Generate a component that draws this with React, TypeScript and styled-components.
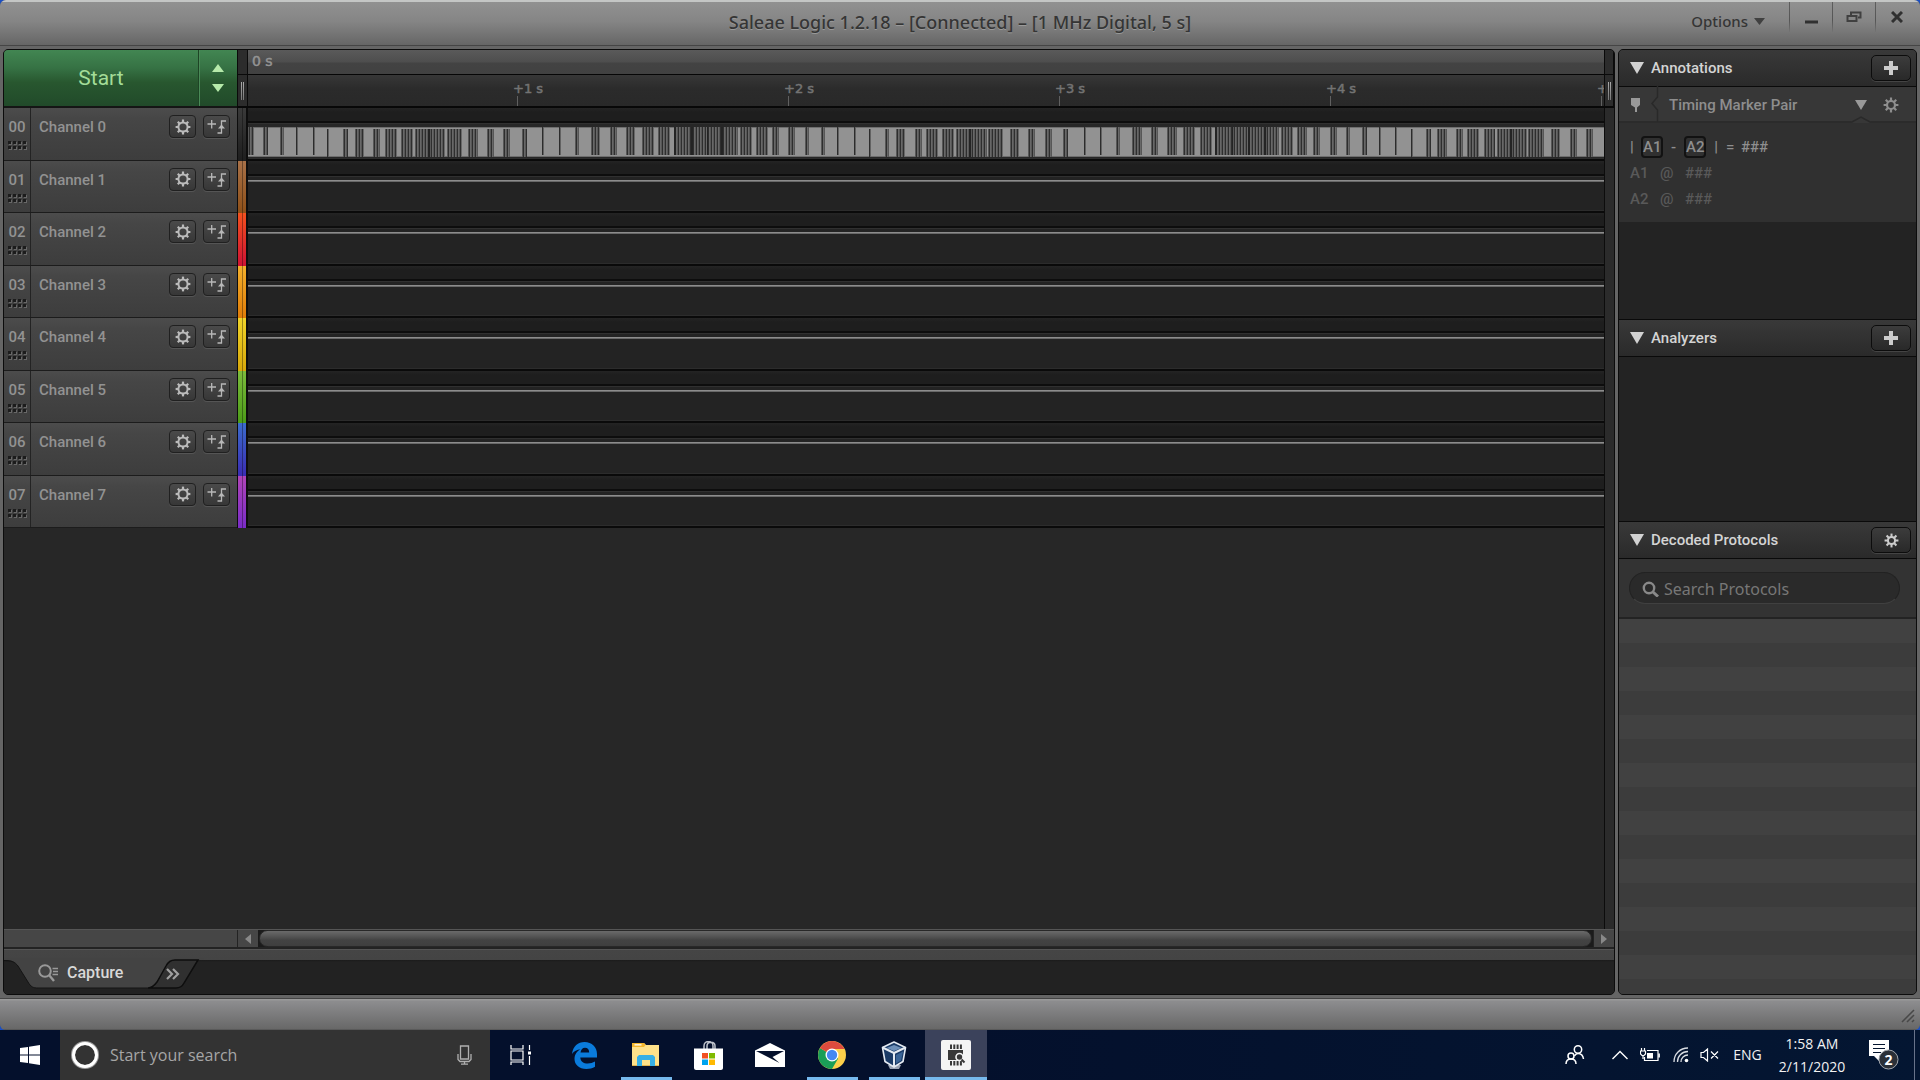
import React from "react";
import styled, { createGlobalStyle } from "styled-components";

const ui = `Roboto, "Liberation Sans", sans-serif`;
const humanist = `"Noto Sans", "Open Sans", sans-serif`;
const wide = `"DejaVu Sans", "Noto Sans", sans-serif`;
const system = `"Open Sans", "Noto Sans", sans-serif`;

const Global = createGlobalStyle`
  * { box-sizing: border-box; }
  body { margin: 0; background: #04102c; font-family: ${ui}; overflow: hidden; }
  button, input { font: inherit; color: inherit; border: 0; padding: 0; margin: 0; background: none; }
  svg { display: block; flex: none; }
`;

const Desktop = styled.div`
  height: 100vh;
  display: flex;
  flex-direction: column;
  background: #1c4fc0;
`;

const Window = styled.div`
  flex: 1;
  min-height: 0;
  display: flex;
  flex-direction: column;
  border-radius: 6px;
  overflow: hidden;
  background: #5d5d5d;
`;

/* ---------- title bar ---------- */
const TitleBar = styled.header`
  height: 46px;
  flex: none;
  display: grid;
  grid-template-columns: 1fr auto 1fr;
  border-top: 2px solid #c4c6c5;
  border-bottom: 1px solid #454545;
  background: linear-gradient(#919191, #858585 45%, #666);
  color: #353535;
`;

const Title = styled.h1`
  grid-column: 2;
  margin: 0;
  font: 500 18px/41px ${humanist};
  text-shadow: 0 1px 0 #9a9a9a;
`;

const TitleTools = styled.div`
  display: flex;
  justify-content: flex-end;
  padding-right: 2px;
`;

const OptionsButton = styled.button`
  display: flex;
  align-items: center;
  gap: 6px;
  margin-right: 24px;
  height: 38px;
  font: 500 15px/20px ${humanist};
`;

const CaptionButton = styled.button`
  width: 43px;
  height: 30px;
  display: flex;
  justify-content: center;
  align-items: center;
  border-left: 1px solid;
  border-image: linear-gradient(#5e5e5e, #555 60%, #777) 1;
`;

/* ---------- work area ---------- */
const Work = styled.div`
  flex: 1;
  min-height: 0;
  display: grid;
  grid-template-columns: minmax(0, 1fr) 299px;
  gap: 3px;
  padding: 3px;
  background: #656565;
`;

const Main = styled.main`
  display: flex;
  flex-direction: column;
  min-height: 0;
  border: 1px solid #0c0c0c;
  border-radius: 5px;
  overflow: hidden;
  background: #272727;
`;

const Board = styled.div`
  flex: 1;
  min-height: 0;
  display: grid;
  grid-template-columns: 233px 11px minmax(0, 1fr) 10px;
  grid-template-rows: 58px 420px 1fr;
`;

const StartBar = styled.div`
  display: grid;
  grid-template-columns: 1fr 38px;
  border-bottom: 2px solid #151515;
`;

const startGreen = `linear-gradient(#428652, #367244 32%, #28572f 58%, #214a2a)`;

const StartButton = styled.button`
  background: ${startGreen};
  color: #a3dc98;
  font: 400 21px/24px ${ui};
  border-right: 1px solid #1d4425;
`;

const DurationButtons = styled.div`
  display: flex;
  flex-direction: column;
  background: ${startGreen};
  border-left: 1px solid #4a8a57;
`;

const Stepper = styled.button<{ $up?: boolean }>`
  flex: 1;
  display: flex;
  justify-content: center;
  align-items: ${(p) => (p.$up ? "flex-end" : "flex-start")};
  padding: 6px 2px 6px 0;
`;

const Handle = styled.div`
  display: flex;
  flex-direction: column;
  border-left: 1px solid #0a0a0a;
  border-right: 1px solid #0a0a0a;
  border-bottom: 2px solid #080808;
  background: #2c2c2c;
`;

const HandleTop = styled.div`
  height: 25px;
  border-bottom: 1px solid #0a0a0a;
`;

const Grip = styled.div`
  flex: 1;
  display: flex;
  justify-content: center;
  align-items: center;
  gap: 1px;
  &::before, &::after {
    content: "";
    width: 1px;
    height: 18px;
    background: linear-gradient(#aaa, #777);
  }
`;

const Ruler = styled.div`
  display: grid;
  grid-template-rows: 25px 33px;
  min-width: 0;
  overflow: hidden;
`;

const RulerTop = styled.div`
  border-bottom: 1px solid #060606;
  background: linear-gradient(#5a5a5a, #4e4e4e 50%, #434343 54%, #414141);
  color: #949494;
  font: 400 14px/23px ${wide};
  -webkit-text-stroke: 0.5px;
  padding-left: 4px;
`;

const RulerTicks = styled.div`
  display: grid;
  grid-template-columns: 265px repeat(4, 271px) 1fr;
  border-bottom: 2px solid #080808;
  background: linear-gradient(#373737, #2b2b2b 45%, #292929);
`;

const Tick = styled.div`
  white-space: nowrap;
  color: #737373;
  font: 400 13px/28px ${wide};
  -webkit-text-stroke: 0.5px;
  background: linear-gradient(#606060, #606060) 4px 100% / 1px 10px no-repeat;
`;

const Channels = styled.div`
  display: grid;
  grid-template-rows: repeat(8, 1fr);
`;

const ChannelHead = styled.div`
  display: grid;
  grid-template-columns: 27px 1fr auto auto;
  border-bottom: 1px solid #1c1c1c;
  background: linear-gradient(#4c4c4c, #464646 20%, #3d3d3d);
  color: #929292;
`;

const ChannelIndex = styled.div`
  display: flex;
  flex-direction: column;
  align-items: center;
  border-right: 1px solid #232323;
  font: 500 15px/20px ${ui};
  padding-top: 9px;
  gap: 4px;
`;

const ChannelName = styled.div`
  font: 500 15px/20px ${ui};
  padding: 9px 0 0 8px;
`;

const SmallButton = styled.button`
  width: 27px;
  height: 23px;
  margin: 7px 7px 0 0;
  display: flex;
  align-items: center;
  justify-content: center;
  border: 1px solid #202020;
  border-radius: 4px;
  background: linear-gradient(#4a4a4a, #373737);
  box-shadow: 0 1px 0 #555;
  color: #bbb;
`;

const ColorStrip = styled.div<{ $from: string; $to: string }>`
  border: 1px solid #0d0d0d;
  border-width: 0 2px 0 1px;
  background:
    linear-gradient(90deg, transparent 45%, rgba(0, 0, 0, 0.35) 45%, rgba(0, 0, 0, 0.35) 60%, transparent 60%),
    linear-gradient(${(p) => p.$from}, ${(p) => p.$to});
`;

const Track = styled.div`
  min-width: 0;
  display: grid;
  grid-template-rows: 15px 1fr;
  border-bottom: 2px solid #0a0a0a;
  background: #232323;
`;

const TrackTop = styled.div`
  border-bottom: 2px solid #0d0d0d;
  background: linear-gradient(#242424, #1e1e1e 30%);
`;

const TrackBody = styled.div`
  padding-top: 3px;
  border-top: 1px solid #303030;
  border-bottom: 1px solid #2c2c2c;
  background: #232323;
`;

const FlatLine = styled.div`
  height: 2px;
  background: linear-gradient(#8c8c8c 50%, #686868 50%);
`;

const WaveBody = styled(TrackBody)`
  padding: 3px 0 0;
  background: #272727;
  svg { width: 100%; height: 30px; }
`;

const RightRail = styled.div`
  grid-row: 2 / 4;
  grid-column: 4;
  border-left: 1px solid #0c0c0c;
  background: #2b2b2b;
`;

/* ---------- horizontal scroll ---------- */
const ScrollRow = styled.div`
  height: 20px;
  flex: none;
  display: grid;
  grid-template-columns: 233px 21px minmax(0, 1fr) 21px;
  border-top: 1px solid #555;
  border-bottom: 2px solid #232323;
  background: #464646;
`;

const ScrollArrow = styled.button`
  border-left: 1px solid #232323;
  display: flex;
  align-items: center;
  justify-content: center;
  color: #898989;
`;

const ScrollTrack = styled.div`
  background: #1b1b1b;
  padding: 0 1px;
`;

const ScrollThumb = styled.div`
  height: 17px;
  border: 1px solid #282828;
  border-radius: 9px;
  background: linear-gradient(#6a6a6a, #555 35%, #434343 60%, #3f3f3f);
`;

const Tabs = styled.div`
  height: 45px;
  flex: none;
  display: grid;
  grid-template-columns: 200px 1fr;
  border-top: 1px solid #555;
  background: linear-gradient(#454545 0, #444 10px, #1b1b1b 10px, #222 12px, #222);
`;

const TabStrip = styled.div`
  position: relative;
  display: grid;
  grid-template-columns: 148px 50px;
  > svg { position: absolute; left: 0; top: 0; }
`;

const Tab = styled.button`
  position: relative;
  display: flex;
  align-items: center;
  gap: 8px;
  padding: 1px 0 0 34px;
  color: #d8d8d8;
  font: 500 16px/20px ${ui};
`;

const MoreTab = styled(Tab)`
  padding: 4px 0 0 14px;
`;

/* ---------- side panels ---------- */
const Side = styled.aside`
  display: grid;
  grid-template-columns: minmax(0, 1fr);
  grid-template-rows: 269px 202px minmax(0, 1fr);
  min-height: 0;
  border: 1px solid #0c0c0c;
  border-radius: 5px;
  overflow: hidden;
  background: #232323;
`;

const Panel = styled.section`
  display: flex;
  flex-direction: column;
  min-height: 0;
`;

const PanelHead = styled.div<{ $first?: boolean }>`
  height: ${(p) => (p.$first ? 37 : 38)}px;
  flex: none;
  display: grid;
  grid-template-columns: 14px 1fr 40px;
  gap: 7px;
  align-items: center;
  padding: 0 5px 0 11px;
  border-top: ${(p) => (p.$first ? 0 : 1)}px solid #0a0a0a;
  border-bottom: 1px solid #0a0a0a;
  background: linear-gradient(#393939, #2a2a2a);
  color: #d4d4d4;
  h2 { margin: 0; font: 500 15px/20px ${ui}; }
`;

const PanelButton = styled.button`
  height: 26px;
  display: flex;
  justify-content: center;
  align-items: center;
  border: 1px solid #0c0c0c;
  border-radius: 5px;
  background: linear-gradient(#3c3c3c, #292929);
  box-shadow: 0 1px 0 #444;
  color: #ccc;
`;

const MarkerHead = styled.div`
  height: 36px;
  flex: none;
  display: grid;
  grid-template-columns: 38px 1fr 12px 32px;
  align-items: center;
  padding: 0 17px 0 11px;
  background: #373737;
  color: #8e8e8e;
  position: relative;
  font: 500 15px/20px ${ui};
  > :last-child { margin-left: 16px; }
`;

const MarkerEdge = styled.svg`
  position: absolute;
  left: 0;
  bottom: 0;
`;

const MarkerLabel = styled.span`
  padding-left: 1px;
`;

const MarkerBody = styled.div`
  height: 99px;
  flex: none;
  padding: 11px;
  background: #303030;
  color: #8e8e8e;
  font: 500 15px/26px ${ui};
`;

const Formula = styled.div`
  display: grid;
  grid-template-columns: 11px 22px 21px 22px 20px 15px auto;
  align-items: center;
  span:nth-of-type(2), span:nth-of-type(3) { text-align: center; }
`;

const MarkerButton = styled.button`
  height: 22px;
  border: 2px solid #121212;
  border-radius: 4px;
  background: #303030;
  font: 500 15px/18px ${ui};
`;

const MarkerTime = styled.div`
  display: grid;
  grid-template-columns: 30px 25px auto;
  color: #595959;
`;

const SearchArea = styled.div`
  height: 60px;
  flex: none;
  padding: 13px 16px 0 10px;
  border-bottom: 2px solid #232323;
  background: #333;
`;

const SearchBox = styled.label`
  height: 32px;
  display: flex;
  align-items: center;
  gap: 5px;
  padding: 1px 12px 0;
  border: 1px solid #222;
  border-bottom-color: #404040;
  border-radius: 16px;
  background: #2a2a2a;
  color: #898989;
  input {
    flex: 1;
    min-width: 0;
    outline: 0;
    font: 400 16px/20px ${humanist};
    &::placeholder { color: #777; opacity: 1; }
  }
`;

const ResultList = styled.div`
  flex: 1;
  background: repeating-linear-gradient(#414141 0, #414141 24px, #3c3c3c 24px, #3c3c3c 48px);
`;

const StatusBar = styled.footer`
  height: 32px;
  flex: none;
  display: flex;
  justify-content: flex-end;
  align-items: center;
  padding: 3px 5px 0 0;
  border-top: 1px solid #454545;
  border-bottom: 1px solid #5a5a5a;
  background: linear-gradient(#999 1px, #8d8d8f 2px, #686868);
`;

/* ---------- taskbar ---------- */
const Taskbar = styled.nav`
  height: 50px;
  flex: none;
  display: flex;
  background: linear-gradient(90deg, #04102c, #04102c 50%, #041632);
  color: #f2f2f2;
  font-family: ${system};
`;

const StartMenu = styled.button`
  width: 60px;
  display: flex;
  justify-content: center;
  align-items: center;
`;

const TaskSearch = styled.label`
  width: 430px;
  display: flex;
  align-items: center;
  gap: 11px;
  padding: 0 18px 0 11px;
  background: #333;
  input {
    flex: 1;
    min-width: 0;
    outline: 0;
    font: 400 16px/22px ${system};
    &::placeholder { color: #a6a6a6; opacity: 1; }
  }
`;

const Tasks = styled.div`
  display: flex;
  padding-right: 1px;
`;

const Task = styled.button<{ $running?: boolean; $active?: boolean }>`
  width: 62px;
  display: flex;
  justify-content: center;
  align-items: center;
  background: ${(p) =>
    p.$active
      ? "linear-gradient(#3b425b 47px, #76b9ed 47px)"
      : p.$running
        ? "linear-gradient(#76b9ed, #76b9ed) 50% 100% / 51px 3px no-repeat"
        : "none"};
`;

const TaskView = styled(Task)`
  width: 63px;
  padding-right: 3px;
`;

const Tray = styled.div`
  margin-left: auto;
  display: flex;
  align-items: center;
  padding-right: 5px;
`;

const TrayButton = styled.button<{ $w: number }>`
  width: ${(p) => p.$w}px;
  height: 50px;
  display: flex;
  justify-content: center;
  align-items: center;
  font: 400 14px/20px ${system};
`;

const Clock = styled(TrayButton)`
  flex-direction: column;
  font: 400 14px/23px ${system};
`;

const ShowDesktop = styled.div`
  width: 1px;
  height: 50px;
  background: #68738a;
`;

/* ---------- icons ---------- */
function Gear({ size = 16, ring = 4, hub = 2 }: { size?: number; ring?: number; hub?: number }) {
  return (
    <svg width={size} height={size} viewBox="0 0 16 16" fill="none" stroke="currentColor">
      <circle cx="8" cy="8" r={ring} strokeWidth={hub} />
      {[0, 45, 90, 135, 180, 225, 270, 315].map((a) => (
        <path key={a} d={`M8 ${8 - ring}V0.6`} strokeWidth="2.2" transform={`rotate(${a} 8 8)`} />
      ))}
    </svg>
  );
}

const TriggerIcon = () => (
  <svg width="20" height="17" viewBox="0 0 20 17" fill="none" stroke="#b8b8b8" strokeWidth="1.3">
    <path d="M0.500 6h8.500M4.700 2v8.500M10.500 15h4V3H19" />
    <path d="M11 10.500l3.500-4 3.500 4z" fill="#b8b8b8" stroke="none" />
  </svg>
);

const Dots = () => (
  <svg width="19" height="9" viewBox="0 0 19 9">
    {[0, 5, 10, 15].map((x) =>
      [0, 5].map((y) => (
        <g key={`${x}-${y}`}>
          <rect x={x + 1} y={y + 1} width="3" height="3" fill="#686868" />
          <rect x={x} y={y} width="3" height="3" fill="#1c1c1c" />
        </g>
      )),
    )}
  </svg>
);

const Triangle = ({ w, h, fill, up }: { w: number; h: number; fill: string; up?: boolean }) => (
  <svg width={w} height={h} viewBox={`0 0 ${w} ${h}`}>
    <path d={up ? `M0 ${h}L${w / 2} 0L${w} ${h}z` : `M0 0H${w}L${w / 2} ${h}z`} fill={fill} />
  </svg>
);

const Plus = () => (
  <svg width="14" height="14" viewBox="0 0 14 14">
    <path d="M5 0h4v5h5v4H9v5H5V9H0V5h5z" fill="#ccc" />
  </svg>
);

/* ---------- data ---------- */
const channels: [string, string][] = [
  ["#3a3a3a", "#1e1e1e"],
  ["#a87148", "#8f5018"],
  ["#f4511e", "#cf1234"],
  ["#f3b02c", "#e07c08"],
  ["#f0d42a", "#d8a80a"],
  ["#7cbc3c", "#4c9c18"],
  ["#3c6ccc", "#3a2cb4"],
  ["#b044b8", "#7a2cc8"],
];

// Burst extents in track pixels, split by the two phases of the signal.
const phaseA: [number, number][] = [
  [1, 7], [16, 21], [33, 37], [49, 51], [66, 67],
  [295, 297], [312, 313], [328, 332], [344, 353], [363, 370], [379, 388], [395, 407], [411, 423], [427, 491], [493, 505],
  [509, 521], [525, 532], [541, 548], [558, 562], [574, 578], [590, 592], [607, 608],
  [837, 838], [853, 854], [869, 873], [885, 895], [904, 911], [920, 930], [936, 948], [953, 965], [968, 1032],
  [1034, 1046], [1050, 1060], [1066, 1073], [1083, 1090], [1099, 1103], [1115, 1120], [1132, 1133], [1148, 1149],
];
const phaseB: [number, number][] = [
  [80, 82], [96, 101], [108, 117], [126, 133], [138, 150], [154, 166], [168, 198], [200, 215], [221, 231], [240, 247],
  [256, 263], [275, 280],
  [622, 623], [638, 642], [649, 658], [668, 675], [679, 691], [695, 707], [709, 740], [741, 756], [763, 772],
  [781, 788], [798, 805], [816, 821],
  [1164, 1165], [1179, 1184], [1190, 1200], [1209, 1216], [1220, 1232], [1237, 1248], [1250, 1280], [1281, 1297],
  [1304, 1313], [1323, 1330], [1339, 1346],
];
const blackSpots = [181, 182, 427, 428, 444, 445, 460, 474, 475, 722, 723, 968, 969, 985, 1001, 1002, 1017, 1018, 1263, 1264];
const burstShades = ["#575757", "#2e2e2e", "#686868"];

function Bursts({ list, y }: { list: [number, number][]; y: number }) {
  return (
    <>
      {list.map(([a, b]) =>
        Array.from({ length: Math.max(2, b - a) }, (_, i) => {
          const narrow = b - a <= 2;
          const shade = narrow ? (i === 0 ? "#2c2c2c" : "#626262") : burstShades[i % 3];
          return (
            <rect
              key={`${a}-${i}`}
              x={a + i}
              y={y}
              width="1"
              height="28"
              fill={blackSpots.includes(a + i) ? "#242424" : shade}
            />
          );
        }),
      )}
    </>
  );
}

const Waveform = () => (
  <svg viewBox="0 0 1356 30" preserveAspectRatio="none" shapeRendering="crispEdges">
    <rect width="1356" height="30" fill="#929292" />
    <rect width="1356" height="1" fill="#6e6e6e" />
    <rect y="29" width="1356" height="1" fill="#6e6e6e" />
    <g transform="translate(-1 0)">
      <Bursts list={phaseA} y={0} />
      <Bursts list={phaseB} y={2} />
    </g>
  </svg>
);

const PanelTitle = ({ title, first, children }: { title: string; first?: boolean; children: React.ReactNode }) => (
  <PanelHead $first={first}>
    <Triangle w={14} h={12} fill="#d2d2d2" />
    <h2>{title}</h2>
    {children}
  </PanelHead>
);

export default function App() {
  return (
    <Desktop>
      <Global />
      <Window>
        <TitleBar>
          <Title>Saleae Logic 1.2.18 – [Connected] – [1 MHz Digital, 5 s]</Title>
          <TitleTools>
            <OptionsButton>
              Options
              <Triangle w={11} h={7} fill="#404040" />
            </OptionsButton>
            <CaptionButton aria-label="Minimize">
              <svg width="13" height="14"><path d="M0 12h13" stroke="#303030" strokeWidth="3" /></svg>
            </CaptionButton>
            <CaptionButton aria-label="Restore">
              <svg width="16" height="12" fill="none" stroke="#404040" strokeWidth="2">
                <path d="M1.500 5h9v5h-9zM5 4V1.500h9.500v5H12" />
              </svg>
            </CaptionButton>
            <CaptionButton aria-label="Close">
              <svg width="12" height="12"><path d="M1 1l10 10M11 1L1 11" stroke="#303030" strokeWidth="3" /></svg>
            </CaptionButton>
          </TitleTools>
        </TitleBar>

        <Work>
          <Main>
            <Board>
              <StartBar>
                <StartButton>Start</StartButton>
                <DurationButtons>
                  <Stepper $up aria-label="Increase"><Triangle w={12} h={8} fill="#b6eaaa" up /></Stepper>
                  <Stepper aria-label="Decrease"><Triangle w={12} h={8} fill="#b6eaaa" /></Stepper>
                </DurationButtons>
              </StartBar>
              <Handle><HandleTop /><Grip /></Handle>
              <Ruler>
                <RulerTop>0 s</RulerTop>
                <RulerTicks>
                  <span />
                  {["+1 s", "+2 s", "+3 s", "+4 s"].map((t) => <Tick key={t}>{t}</Tick>)}
                  <Tick>+</Tick>
                </RulerTicks>
              </Ruler>
              <Handle><HandleTop /><Grip /></Handle>

              <Channels>
                {channels.map((_, i) => (
                  <ChannelHead key={i}>
                    <ChannelIndex>{`0${i}`}<Dots /></ChannelIndex>
                    <ChannelName>Channel {i}</ChannelName>
                    <SmallButton aria-label="Settings"><Gear size={16} ring={4.600} hub={2} /></SmallButton>
                    <SmallButton aria-label="Trigger"><TriggerIcon /></SmallButton>
                  </ChannelHead>
                ))}
              </Channels>
              <Channels>
                {channels.map(([a, b], i) => <ColorStrip key={i} $from={a} $to={b} />)}
              </Channels>
              <Channels>
                {channels.map((_, i) => (
                  <Track key={i}>
                    <TrackTop />
                    {i === 0 ? <WaveBody><Waveform /></WaveBody> : <TrackBody><FlatLine /></TrackBody>}
                  </Track>
                ))}
              </Channels>
              <RightRail />
            </Board>

            <ScrollRow>
              <span />
              <ScrollArrow aria-label="Scroll left">
                <svg width="6" height="10"><path d="M6 0v10L0 5z" fill="currentColor" /></svg>
              </ScrollArrow>
              <ScrollTrack><ScrollThumb /></ScrollTrack>
              <ScrollArrow aria-label="Scroll right">
                <svg width="6" height="10"><path d="M0 0v10l6-5z" fill="currentColor" /></svg>
              </ScrollArrow>
            </ScrollRow>

            <Tabs>
              <TabStrip>
                <svg width="200" height="44" viewBox="0 1 200 44">
                  <path d="M0 10V11C8 11 11 13 14 17L24 33C27 38 29 39 34 39H144C148 39 150 37 153 33L162 17C164 13 167 11 171 11H200V9H0z" fill="#434343" />
                  <path d="M0 11.500C8 11.500 11 13 14 17L24 33C27 38 29 39 34 39H144" fill="none" stroke="#141414" />
                  <path d="M144 39C148 39 150 37 153 33L162 17C164 13 167 11 171 11H194L180 34C178 38 176 39 172 39z" fill="#303030" stroke="#0e0e0e" strokeWidth="1.500" />
                </svg>
                <Tab>
                  <svg width="21" height="18" viewBox="0 0 21 18" fill="none" stroke="#999">
                    <circle cx="7" cy="7" r="5.800" strokeWidth="2" />
                    <path d="M11 11l5 6" strokeWidth="2.400" />
                    <path d="M14.500 4.500H20M15 7.500h5M14.500 10.500H20" strokeWidth="1.400" />
                  </svg>
                  Capture
                </Tab>
                <MoreTab aria-label="More tabs">
                  <svg width="14" height="12" fill="none" stroke="#a0a0a0" strokeWidth="2.200">
                    <path d="M1 1l5 5-5 5M7 1l5 5-5 5" />
                  </svg>
                </MoreTab>
              </TabStrip>
            </Tabs>
          </Main>

          <Side>
            <Panel>
              <PanelTitle title="Annotations" first>
                <PanelButton aria-label="Add annotation"><Plus /></PanelButton>
              </PanelTitle>
              <MarkerHead>
                <MarkerEdge width="297" height="38" fill="none" stroke="#292929" strokeWidth="1.500">
                  <path d="M38.500 0V12L33 18.500L38.500 25V37M0 37H233L242 32L251 37H297" />
                </MarkerEdge>
                <svg width="11" height="16"><path d="M1 1h9v7l-3 2.500V15H5v-4.500L1 8z" fill="#999" /></svg>
                <MarkerLabel>Timing Marker Pair</MarkerLabel>
                <Triangle w={12} h={10} fill="#999" />
                <Gear size={16} ring={4} hub={2.200} />
              </MarkerHead>
              <MarkerBody>
                <Formula>
                  <span>|</span>
                  <MarkerButton>A1</MarkerButton>
                  <span>-</span>
                  <MarkerButton>A2</MarkerButton>
                  <span>|</span>
                  <span>=</span>
                  <span>###</span>
                </Formula>
                <MarkerTime><span>A1</span><span>@</span><span>###</span></MarkerTime>
                <MarkerTime><span>A2</span><span>@</span><span>###</span></MarkerTime>
              </MarkerBody>
            </Panel>
            <Panel>
              <PanelTitle title="Analyzers">
                <PanelButton aria-label="Add analyzer"><Plus /></PanelButton>
              </PanelTitle>
            </Panel>
            <Panel>
              <PanelTitle title="Decoded Protocols">
                <PanelButton aria-label="Protocol settings"><Gear size={15} ring={3.800} hub={2.200} /></PanelButton>
              </PanelTitle>
              <SearchArea>
                <SearchBox>
                  <svg width="17" height="16" fill="none" stroke="currentColor">
                    <circle cx="7" cy="7" r="5.200" strokeWidth="2.400" />
                    <path d="M11 11l5 4.500" strokeWidth="3" />
                  </svg>
                  <input aria-label="Search Protocols" placeholder="Search Protocols" />
                </SearchBox>
              </SearchArea>
              <ResultList />
            </Panel>
          </Side>
        </Work>

        <StatusBar>
          <svg width="14" height="14" stroke="#484848" strokeWidth="1.500">
            <path d="M1 13L13 1M6 13l7-7M11 13l2-2" />
          </svg>
        </StatusBar>
      </Window>

      <Taskbar>
        <StartMenu aria-label="Start menu">
          <svg width="20" height="20" fill="#fff">
            <path d="M0 3l8-1.100V9.500H0zM9 1.700L20 0v9.500H9zM0 10.500h8V18L0 17zM9 10.500h11V20L9 18.300z" />
          </svg>
        </StartMenu>
        <TaskSearch>
          <svg width="28" height="28" fill="none">
            <circle cx="14" cy="14" r="12" stroke="#999" strokeWidth="4" />
            <circle cx="14" cy="14" r="11.500" stroke="#fff" strokeWidth="3" />
          </svg>
          <input aria-label="Search" placeholder="Start your search" />
          <svg width="15" height="20" fill="none" stroke="#b0b0b0" strokeWidth="1.300">
            <path d="M3.500 1h8v13h-8zM1 9v5.500l2 2h9l2-2V9M7.500 17v2M4 19.200h7" />
          </svg>
        </TaskSearch>

        <Tasks>
          <TaskView aria-label="Task view">
            <svg width="21" height="20" fill="none" stroke="#fff" strokeWidth="1.200">
              <path d="M1 0v4h12V0M1 6h12v9H1zM1 20v-3h12v3M19.500 0v5M19.500 11v9" />
              <path d="M18 6.500h3v3h-3z" fill="#fff" stroke="none" />
            </svg>
          </TaskView>
          <Task aria-label="Edge">
            <svg width="25" height="27" viewBox="0 0 25 27">
              <path d="M0 12C1 4 6 0 12.500 0C20 0 25 5 25 12v3.500H8.300c.3 4 3.200 6 7.400 6c2.900 0 5-.7 7.300-2v5.300c-2.500 1.500-5.300 2.200-8.600 2.200C7 27 2.500 22.500 2.500 17c0-4.500 2.400-8 6-9.800C5 7.500 2 9 0 12zm8.500-1.500h8.700c0-3-1.500-4.700-4.200-4.700c-2.500 0-4 1.700-4.500 4.700z" fill="#0a7bdc" />
            </svg>
          </Task>
          <Task $running aria-label="File Explorer">
            <svg width="28" height="24" viewBox="0 0 28 24">
              <path d="M0 0h12l2 2h13v20H0z" fill="#ffe28a" />
              <path d="M0 0h12l1.500 2-1.500 2H0z" fill="#f5b82e" />
              <path d="M2.500 1.200h7v1.300h-7z" fill="#fff" />
              <path d="M0 22h27v1H0z" fill="#e3b44e" />
              <path d="M5 23V14l2-2h14l2 2v9h-5v-6h-8v6z" fill="#37b0e6" />
            </svg>
          </Task>
          <Task aria-label="Microsoft Store">
            <svg width="29" height="29" viewBox="0 0 29 29">
              <path d="M10 8V5c0-6 9-6 9 0v3M13 8V5c0-5 8-5 8 0v3" fill="none" stroke="#bfc3cc" strokeWidth="1.500" />
              <path d="M0 7.500h29V27c0 1-1 2-2 2H2c-1 0-2-1-2-2z" fill="#fff" />
              <path d="M8 12h6v5.500H8z" fill="#f25022" />
              <path d="M15 12h6v5.500h-6z" fill="#7fba00" />
              <path d="M8 18.500h6V24H8z" fill="#00a4ef" />
              <path d="M15 18.500h6V24h-6z" fill="#ffb900" />
            </svg>
          </Task>
          <Task aria-label="Mail">
            <svg width="30" height="24" viewBox="0 0 30 24">
              <path d="M0 7.500L15 0l15 7.500V24H0z" fill="#fff" />
              <path d="M1 8h28L17.500 14 24.500 20z" fill="#04102c" />
            </svg>
          </Task>
          <Task $running aria-label="Chrome">
            <svg width="28" height="28" viewBox="0 0 28 28">
              <circle cx="14" cy="14" r="14" fill="#fdd04a" />
              <path d="M14 14L1.900 7A14 14 0 0 0 14 28L20.100 17.500z" fill="#1b9e57" />
              <path d="M14 14L1.900 7A14 14 0 0 1 26.100 7L26 8H14z" fill="#dd4b3e" />
              <circle cx="14" cy="14" r="6.500" fill="#fff" />
              <circle cx="14" cy="14" r="5.200" fill="#4688f1" />
            </svg>
          </Task>
          <Task $running aria-label="VirtualBox">
            <svg width="26" height="29" viewBox="0 0 26 29" strokeLinejoin="round">
              <path d="M7 24l2 4h9l2-4" fill="#9aa3b4" />
              <path d="M13 1l11.500 5.500-2.500 14L13 26 4 20.500 1.500 6.500z" fill="#1a3a66" stroke="#e4eaf2" strokeWidth="1.600" />
              <path d="M13 4l7.500 3-7.500 3-7.500-3z" fill="#6d8fb8" />
              <path d="M1.500 6.500L13 12l11.500-5.500M13 12v14" fill="none" stroke="#e4eaf2" strokeWidth="2" />
              <path d="M15 14l7-3.500-2 9-5 3z" fill="#3a6496" />
            </svg>
          </Task>
          <Task $active aria-label="Saleae Logic">
            <svg width="30" height="30" viewBox="0 0 30 30">
              <rect width="30" height="30" rx="2" fill="#f4f4f4" />
              <path d="M9 4.500h2V9H9zM12.300 4.500h2V9h-2zM15.600 4.500h2V9h-2zM18.900 4.500h2V9h-2zM9 21h2v4.500H9zM12.300 21h2v4.500h-2zM15.600 21h2v4.500h-2zM18.900 21h2v4.500h-2zM7 10h15v10H7z" fill="#383838" />
              <circle cx="18.500" cy="17" r="3.500" fill="#383838" stroke="#f4f4f4" strokeWidth="1.600" />
              <path d="M20.500 19.500l3 3" stroke="#383838" strokeWidth="2" />
            </svg>
          </Task>
        </Tasks>

        <Tray>
          <TrayButton $w={68} aria-label="People">
            <svg width="20" height="20" fill="none" stroke="#fff" strokeWidth="1.500">
              <circle cx="13" cy="4.500" r="3.700" />
              <circle cx="6" cy="11" r="3" />
              <path d="M1 19c0-3 2-5 5-5s5 2 5 5M9.500 11c1-1.800 2-2.500 3.500-2.500 3 0 5 2 5.500 5.500" />
            </svg>
          </TrayButton>
          <TrayButton $w={22} aria-label="Show hidden icons">
            <svg width="16" height="10" fill="none" stroke="#fff" strokeWidth="1.400"><path d="M0.500 9L8 1.500 15.500 9" /></svg>
          </TrayButton>
          <TrayButton $w={38} aria-label="Battery">
            <svg width="20" height="14" fill="none" stroke="#fff" strokeWidth="1.200">
              <path d="M7 2.500h11v10H4.500V9M19.300 5.500v4M1.500 0v3M4.500 0v3M0.500 3h5v3l-1.500 1.500h-2L.5 6zM3 8v3" />
              <path d="M7 5h6v5.500H7z" fill="#fff" stroke="none" />
            </svg>
          </TrayButton>
          <TrayButton $w={24} aria-label="Wi-Fi">
            <svg width="16" height="16" fill="none" stroke="#d8dce2" strokeWidth="1.300">
              <path d="M1 15C1 7 7 1 15 1M4.500 15C4.500 9 9 4.500 15 4.500M8 15c0-4 3-7 7-7" />
              <circle cx="13.500" cy="13.500" r="1.800" fill="#fff" stroke="none" />
            </svg>
          </TrayButton>
          <TrayButton $w={32} aria-label="Volume muted">
            <svg width="19" height="14" fill="none" stroke="#fff" strokeWidth="1.200">
              <path d="M1 4.500h2.500L7.500 1v12L3.500 9.500H1zM11 3.500l7 7M18 3.500l-7 7" />
            </svg>
          </TrayButton>
          <TrayButton $w={45}>ENG</TrayButton>
          <Clock $w={84}>
            <span>1:58 AM</span>
            <span>2/11/2020</span>
          </Clock>
          <TrayButton $w={60} aria-label="Notifications">
            <svg width="30" height="30" viewBox="0 0 30 30">
              <path d="M0 0h20v16H10v5l-5-5H0z" fill="#fff" />
              <path d="M4 4.500h12M4 8.500h12M4 12.500h8" stroke="#04152f" strokeWidth="1.200" />
              <circle cx="19.500" cy="19.500" r="9.500" fill="#2b3038" stroke="#a2a6ac" />
              <text x="19.500" y="25" fill="#fff" textAnchor="middle" fontFamily="Open Sans, sans-serif" fontSize="14" fontWeight="700">2</text>
            </svg>
          </TrayButton>
          <ShowDesktop />
        </Tray>
      </Taskbar>
    </Desktop>
  );
}
